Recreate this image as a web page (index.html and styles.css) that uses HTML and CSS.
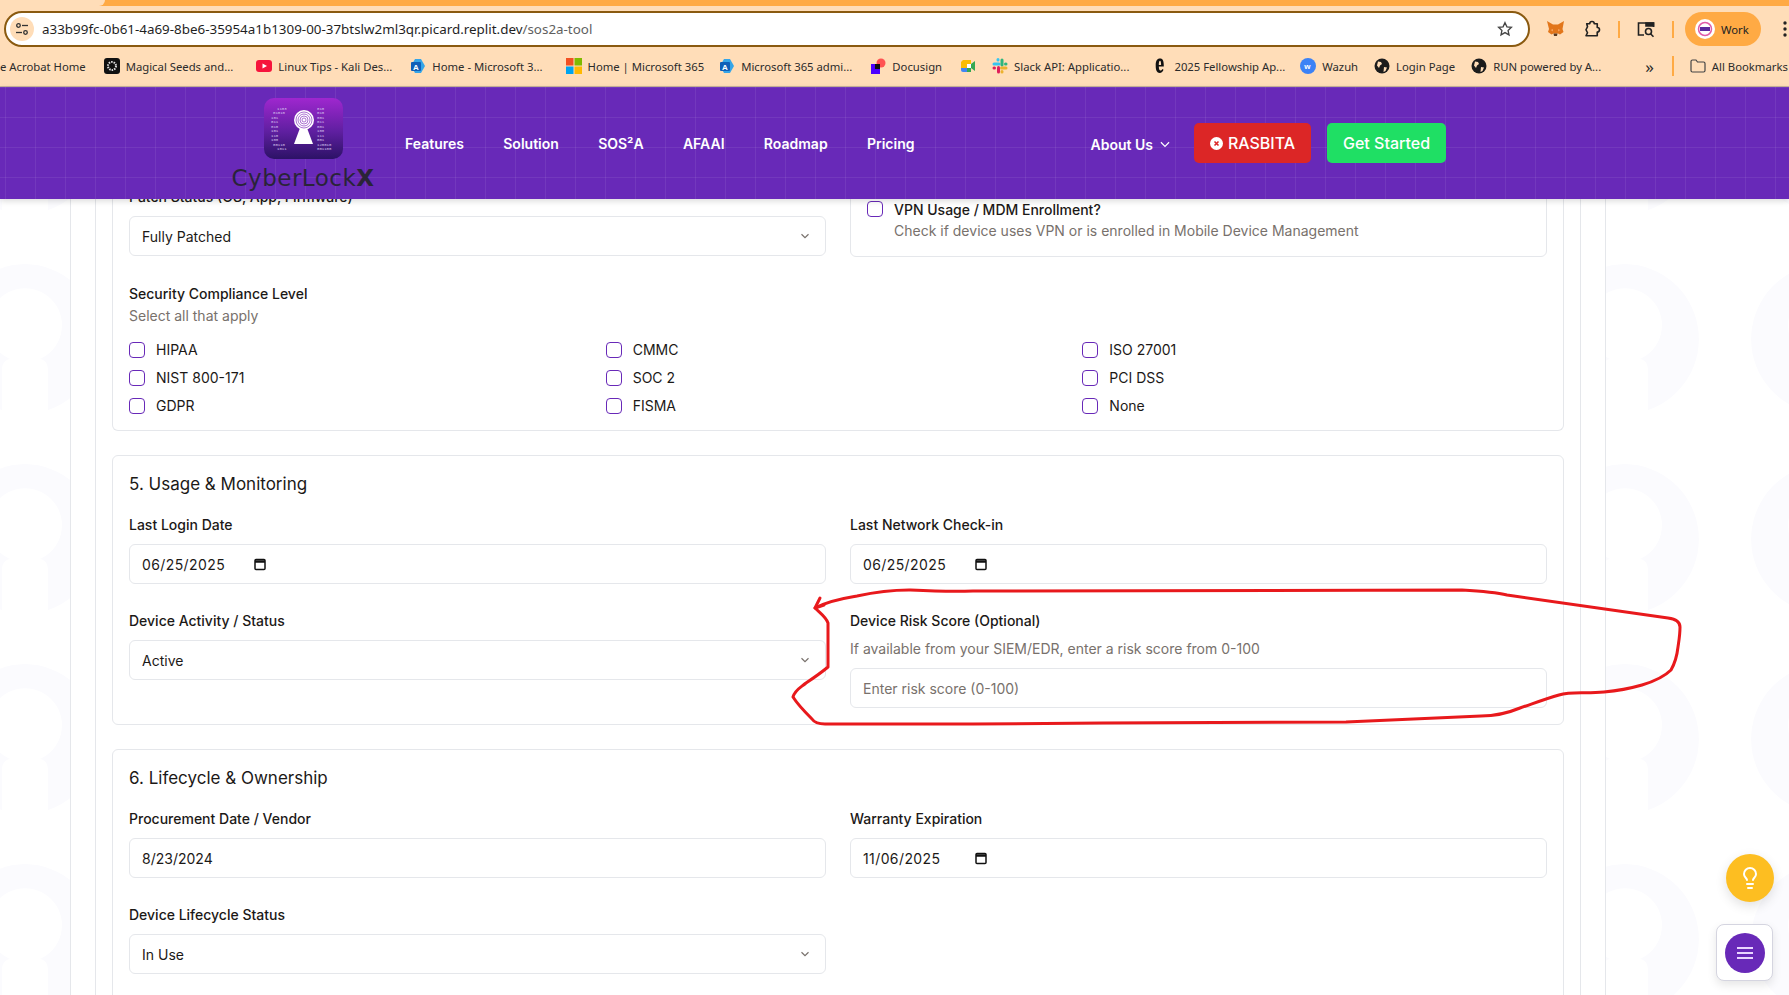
FILE: index.html
```html
<!DOCTYPE html>
<html>
<head>
	<meta charset="utf-8">
	<meta name="viewport" content="width=device-width, initial-scale=1">
	<title>SOS2A Tool</title>
	<link rel="stylesheet" href="styles.css">
</head>
<body>

    <div class="browser">
        <div class="tabstrip"><div class="tab-edge"></div></div>
        <div class="toolbar">
            <div class="urlbar">
                <span class="site-icon">
                    <svg width="14" height="14" viewBox="0 0 14 14" fill="none" stroke="#333" stroke-width="1.3"><circle cx="3.5" cy="3.5" r="1.8"/><path d="M7 3.5h6"/><circle cx="10.5" cy="10.5" r="1.8"/><path d="M1 10.5h6"/></svg>
                </span>
                <span class="url">a33b99fc-0b61-4a69-8be6-35954a1b1309-00-37btslw2ml3qr.picard.replit.dev<span class="url-path">/sos2a-tool</span></span>
                <svg class="star" width="16" height="16" viewBox="0 0 24 24" fill="none" stroke="#444" stroke-width="2"><path d="M12 2.5l2.9 6.2 6.7.8-5 4.6 1.4 6.7-6-3.4-6 3.4 1.4-6.7-5-4.6 6.7-.8z"/></svg>
            </div>
            <svg class="tool fox" width="17" height="16" viewBox="0 0 17 16"><path fill="#e2761b" d="M0 0l6 3.5h5L17 0l-1.5 8 1 3-3.5 2.500-2-1H6.500l-2 1L1 11l1-3z"/><path fill="#f6a05a" d="M6 8l-2.500 1L6 10.500zM11 8l2.500 1L11 10.500z"/><path fill="#5b3a20" d="M6.500 12.500h4L10 15H7z"/></svg>
            <svg class="tool puzzle" width="18" height="18" viewBox="0 0 24 24" fill="none" stroke="#222" stroke-width="2.200" stroke-linejoin="round"><path d="M5 5h4a3 3 0 0 1 6 0h4v5a3 3 0 0 1 0 6v5H4l2-4-2-4 2-4z"/></svg>
            <span class="tool-sep"></span>
            <svg class="tool capture" width="18" height="17" viewBox="0 0 18 17" fill="none" stroke="#222" stroke-width="1.600"><path d="M7 14H1.500V2h15v4"/><path fill="#222" d="M9 2h7.500v3H9z"/><circle cx="11.500" cy="10.500" r="3"/><path d="M13.500 12.800l3 3"/></svg>
            <span class="tool-sep"></span>
            <div class="profile">
                <svg width="20" height="20" viewBox="0 0 20 20"><circle cx="10" cy="10" r="10" fill="#fff"/><circle cx="10" cy="10" r="6.500" fill="none" stroke="#e05ca8" stroke-width="1.500"/><rect x="5" y="8" width="10" height="4" fill="#5b2a9e"/></svg>
                <span>Work</span>
            </div>
            <svg class="tool dots" width="4" height="16" viewBox="0 0 4 16" fill="#222"><circle cx="2" cy="2" r="1.700"/><circle cx="2" cy="8" r="1.700"/><circle cx="2" cy="14" r="1.700"/></svg>
        </div>

        <div class="bookmarks">
            <span class="bm bm-first">e Acrobat Home</span>
            <span class="bm">
                <svg width="16" height="16" viewBox="0 0 16 16"><rect width="16" height="16" rx="3" fill="#111"/><circle cx="8" cy="8" r="4" fill="none" stroke="#ddd" stroke-width="2" stroke-dasharray="1.500 1"/></svg>
                Magical Seeds and...
            </span>
            <span class="bm">
                <svg width="16" height="16" viewBox="0 0 16 16"><rect y="2" width="16" height="12" rx="3" fill="#f6143c"/><path d="M6.500 5.500L11 8l-4.500 2.500z" fill="#fff"/></svg>
                Linux Tips - Kali Des...
            </span>
            <span class="bm">
                <svg width="16" height="16" viewBox="0 0 16 16"><path d="M5 1h6l4 7-4 7H5L1 8z" fill="#35a5e8"/><rect x="1" y="4" width="10" height="9" rx="1" fill="#0f5fb8"/><text x="3" y="11.500" class="bm-glyph">A</text></svg>
                Home - Microsoft 3...
            </span>
            <span class="bm">
                <svg width="16" height="16" viewBox="0 0 16 16"><rect width="7.500" height="7.500" fill="#f25022"/><rect x="8.500" width="7.500" height="7.500" fill="#7fba00"/><rect y="8.500" width="7.500" height="7.500" fill="#00a4ef"/><rect x="8.500" y="8.500" width="7.500" height="7.500" fill="#ffb900"/></svg>
                Home | Microsoft 365
            </span>
            <span class="bm">
                <svg width="16" height="16" viewBox="0 0 16 16"><path d="M5 1h6l4 7-4 7H5L1 8z" fill="#35a5e8"/><rect x="1" y="4" width="10" height="9" rx="1" fill="#0f5fb8"/><text x="3" y="11.500" class="bm-glyph">A</text></svg>
                Microsoft 365 admi...
            </span>
            <span class="bm">
                <svg width="16" height="16" viewBox="0 0 16 16"><circle cx="11" cy="5" r="4.500" fill="#ff5252"/><rect x="1" y="6" width="9" height="10" fill="#4c00ff"/><rect x="5" y="6" width="5" height="5" fill="#111"/></svg>
                Docusign
            </span>
            <span class="bm">
                <svg width="16" height="16" viewBox="0 0 16 16"><path d="M3 2h8v4H7v4H1V4z" fill="#fbbc04"/><path d="M1 10h6v4H3a2 2 0 0 1-2-2z" fill="#4285f4"/><path d="M7 10h4V6l4-3v10l-4-3v4H7z" fill="#34a853"/><rect x="7" y="6" width="4" height="4" fill="#fff"/></svg>
            </span>
            <span class="bm">
                <svg width="16" height="16" viewBox="0 0 16 16" fill="none" stroke-width="3" stroke-linecap="round"><path d="M2 6h5" stroke="#36c5f0"/><path d="M6 1.500V2" stroke="#36c5f0"/><path d="M10 2v5" stroke="#2eb67d"/><path d="M14 6h-.5" stroke="#2eb67d"/><path d="M9.500 10H14" stroke="#ecb22e"/><path d="M10 14v-.5" stroke="#ecb22e"/><path d="M6.500 9.500V14" stroke="#e01e5a"/><path d="M2 10h.5" stroke="#e01e5a"/></svg>
                Slack API: Applicatio...
            </span>
            <span class="bm">
                <svg width="16" height="16" viewBox="0 0 16 16"><path d="M8 0.500c3 0 3.800 2.500 3.800 8H6.800c.1 2.500.6 4 1.700 4 .9 0 1.500-.6 2-1.500l1 .8c-.6 2-2 3.200-3.800 3.200-2.800 0-4-2.800-4-7.500S5 .5 8 .5zm-1.200 6.500h2.300c0-2.500-.3-4.200-1.100-4.200-.8 0-1.200 1.700-1.200 4.200z" fill="#111"/></svg>
                2025 Fellowship Ap...
            </span>
            <span class="bm">
                <svg width="16" height="16" viewBox="0 0 16 16"><circle cx="8" cy="8" r="8" fill="#3b82f6"/><text x="4.300" y="11" class="bm-glyph">w</text></svg>
                Wazuh
            </span>
            <span class="bm">
                <svg width="16" height="16" viewBox="0 0 16 16"><circle cx="8" cy="8" r="7.500" fill="#1c1c1c"/><path d="M4 3.500l3 .5 1 2-2 1.500-1 2.500-2-2.500zM10 9l3 .5-1.500 3.500-2 1z" fill="#ffddb8"/></svg>
                Login Page
            </span>
            <span class="bm">
                <svg width="16" height="16" viewBox="0 0 16 16"><circle cx="8" cy="8" r="7.500" fill="#1c1c1c"/><path d="M4 3.500l3 .5 1 2-2 1.500-1 2.500-2-2.500zM10 9l3 .5-1.500 3.500-2 1z" fill="#ffddb8"/></svg>
                RUN powered by A...
            </span>
            <span class="bm-more">&raquo;</span>
            <span class="bm-sep"></span>
            <span class="bm bm-all">
                <svg width="16" height="14" viewBox="0 0 16 14" fill="none" stroke="#444" stroke-width="1.200"><path d="M1 2.500A1.500 1.500 0 0 1 2.500 1H6l1.500 2h6A1.500 1.500 0 0 1 15 4.500v7a1.500 1.500 0 0 1-1.500 1.500h-11A1.500 1.500 0 0 1 1 11.500z"/></svg>
                All Bookmarks
            </span>
        </div>
    </div>

    <header class="site-header">
        <div class="brand">
            <svg class="brand-logo" width="79" height="61" viewBox="0 0 79 61">
                <defs>
                    <linearGradient id="logoFill" x1="0" y1="0" x2="0" y2="1">
                        <stop offset="0" stop-color="#9f27cf"/>
                        <stop offset="0.55" stop-color="#5f1fa0"/>
                        <stop offset="1" stop-color="#2c1266"/>
                    </linearGradient>
                </defs>
                <rect width="79" height="61" rx="10" fill="url(#logoFill)"/>
                <g class="logo-bits">
                    <text x="13" y="11.500">1103</text>
                    <text x="9" y="16">01010</text>
                    <text x="7" y="20.500">101</text>
                    <text x="7" y="25">011</text>
                    <text x="7" y="29.500">010</text>
                    <text x="7" y="34">101</text>
                    <text x="7" y="38.500">110</text>
                    <text x="7" y="43">100</text>
                    <text x="9" y="47.500">00110</text>
                    <text x="13" y="52">1011</text>
                    <text x="53" y="11.500">010</text>
                    <text x="53" y="16">010</text>
                    <text x="53" y="20.500">001</text>
                    <text x="53" y="25">011</text>
                    <text x="53" y="29.500">001</text>
                    <text x="53" y="34">100</text>
                    <text x="53" y="38.500">111</text>
                    <text x="53" y="43">001</text>
                    <text x="53" y="47.500">120010</text>
                    <text x="53" y="52">001100</text>
                </g>
                <path d="M36 30L30 46h19L43 30z" fill="#fff"/>
                <circle cx="40" cy="22" r="10" fill="#fff"/>
                <g fill="none" stroke="#8a3bc0" stroke-width="0.700">
                    <circle cx="40" cy="22" r="8"/>
                    <circle cx="40" cy="22" r="6"/>
                    <circle cx="40" cy="22" r="4"/>
                    <circle cx="40" cy="22" r="2"/>
                </g>
            </svg>
            <div class="wordmark">CyberLock<b>X</b></div>
        </div>
        <nav class="main-nav">
            <a>Features</a>
            <a>Solution</a>
            <a>SOS²A</a>
            <a>AFAAI</a>
            <a>Roadmap</a>
            <a>Pricing</a>
        </nav>
        <div class="header-right">
            <a class="about">About Us
                <svg width="14" height="14" viewBox="0 0 24 24" fill="none" stroke="#fff" stroke-width="2"><path d="M5 9l7 7 7-7"/></svg>
            </a>
            <button class="btn btn-red">
                <svg width="13" height="13" viewBox="0 0 13 13"><circle cx="6.500" cy="6.500" r="6.500" fill="#fff"/><path d="M4.500 4.500l4 4m0-4l-4 4" stroke="#dc2626" stroke-width="1.600"/></svg>
                RASBITA
            </button>
            <button class="btn btn-green">Get Started</button>
        </div>
    </header>

    <main class="page">
        <div class="shell">
            <div class="inner">

                <section class="card card-top">
                    <div class="form-row form-row-end">
                        <div class="field">
                            <label>Patch Status (OS, App, Firmware)</label>
                            <div class="control select">
                                <span>Fully Patched</span>
                                <svg width="14" height="14" viewBox="0 0 24 24" fill="none" stroke="#78716c" stroke-width="2"><path d="M6 9l6 6 6-6"/></svg>
                            </div>
                        </div>
                        <div class="check-box">
                            <input type="checkbox" class="check">
                            <div>
                                <div class="check-title">VPN Usage / MDM Enrollment?</div>
                                <div class="hint">Check if device uses VPN or is enrolled in Mobile Device Management</div>
                            </div>
                        </div>
                    </div>

                    <div class="compliance">
                        <label>Security Compliance Level</label>
                        <div class="hint">Select all that apply</div>
                        <div class="check-grid">
                            <div class="check-item"><input type="checkbox" class="check">HIPAA</div>
                            <div class="check-item"><input type="checkbox" class="check">CMMC</div>
                            <div class="check-item"><input type="checkbox" class="check">ISO 27001</div>
                            <div class="check-item"><input type="checkbox" class="check">NIST 800-171</div>
                            <div class="check-item"><input type="checkbox" class="check">SOC 2</div>
                            <div class="check-item"><input type="checkbox" class="check">PCI DSS</div>
                            <div class="check-item"><input type="checkbox" class="check">GDPR</div>
                            <div class="check-item"><input type="checkbox" class="check">FISMA</div>
                            <div class="check-item"><input type="checkbox" class="check">None</div>
                        </div>
                    </div>
                </section>

                <section class="card">
                    <h3>5. Usage &amp; Monitoring</h3>
                    <div class="form-row">
                        <div class="field">
                            <label>Last Login Date</label>
                            <div class="control date">
                                <span>06/25/2025</span>
                                <svg width="14" height="14" viewBox="0 0 14 14" fill="none" stroke="#111" stroke-width="1.500"><rect x="2" y="2.500" width="10" height="10" rx="1"/><path d="M2 4.500h10" stroke-width="2.500"/></svg>
                            </div>
                        </div>
                        <div class="field">
                            <label>Last Network Check-in</label>
                            <div class="control date">
                                <span>06/25/2025</span>
                                <svg width="14" height="14" viewBox="0 0 14 14" fill="none" stroke="#111" stroke-width="1.500"><rect x="2" y="2.500" width="10" height="10" rx="1"/><path d="M2 4.500h10" stroke-width="2.500"/></svg>
                            </div>
                        </div>
                        <div class="field">
                            <label>Device Activity / Status</label>
                            <div class="control select">
                                <span>Active</span>
                                <svg width="14" height="14" viewBox="0 0 24 24" fill="none" stroke="#78716c" stroke-width="2"><path d="M6 9l6 6 6-6"/></svg>
                            </div>
                        </div>
                        <div class="field">
                            <label>Device Risk Score (Optional)</label>
                            <div class="hint hint-field">If available from your SIEM/EDR, enter a risk score from 0-100</div>
                            <input class="control text-input" type="text" placeholder="Enter risk score (0-100)">
                        </div>
                    </div>
                </section>

                <section class="card card-last">
                    <h3>6. Lifecycle &amp; Ownership</h3>
                    <div class="form-row">
                        <div class="field">
                            <label>Procurement Date / Vendor</label>
                            <input class="control text-input" type="text" value="8/23/2024">
                        </div>
                        <div class="field">
                            <label>Warranty Expiration</label>
                            <div class="control date">
                                <span>11/06/2025</span>
                                <svg width="14" height="14" viewBox="0 0 14 14" fill="none" stroke="#111" stroke-width="1.500"><rect x="2" y="2.500" width="10" height="10" rx="1"/><path d="M2 4.500h10" stroke-width="2.500"/></svg>
                            </div>
                        </div>
                        <div class="field">
                            <label>Device Lifecycle Status</label>
                            <div class="control select">
                                <span>In Use</span>
                                <svg width="14" height="14" viewBox="0 0 24 24" fill="none" stroke="#78716c" stroke-width="2"><path d="M6 9l6 6 6-6"/></svg>
                            </div>
                        </div>
                    </div>
                </section>

            </div>
        </div>
    </main>

    <!-- hand drawn red circle from the screenshot -->
    <svg class="scribble" width="1789" height="995" viewBox="0 0 1789 995" fill="none" stroke="#e8191c" stroke-width="3" stroke-linecap="round" stroke-linejoin="round">
        <path d="M815 608C830 600 845 598 857 596C880 591 895 590 909 590C930 591 950 592 973 591L1462 590C1480 591 1495 592 1507 595L1668 618C1676 619 1680 622 1680 627C1680 635 1679 640 1678 647C1677 656 1675 663 1671 670C1663 678 1652 682 1642 685C1628 689 1615 691 1604 692C1585 694 1572 691 1559 695C1545 699 1532 704 1520 708C1508 713 1495 716 1481 716L1346 722L1102 723L973 724H825C818 724 814 722 812 719C805 712 798 705 793 697C795 690 800 688 806 683C815 677 822 672 828 667V623C826 617 820 613 815 608Z"/>
        <path d="M820 598L815 608L824 605"/>
    </svg>

    <button class="float-tip">
        <svg width="24" height="24" viewBox="0 0 24 24" fill="none" stroke="#fff" stroke-width="2" stroke-linecap="round" stroke-linejoin="round"><path d="M15 14c.2-1 .7-1.700 1.500-2.500 1-.9 1.500-2.200 1.500-3.500A6 6 0 0 0 6 8c0 1 .2 2.200 1.500 3.500.7.7 1.300 1.500 1.500 2.500"/><path d="M9 18h6"/><path d="M10 22h4"/></svg>
    </button>
    <div class="float-menu">
        <span class="menu-round">
            <svg width="16" height="14" viewBox="0 0 16 14" fill="none" stroke="#e9d5ff" stroke-width="2"><path d="M0 2h16M0 7h16M0 12h16"/></svg>
        </span>
    </div>

</body>
</html>
```

FILE: styles.css
```css
html, body {
    margin: 0;
    height: 995px;
    overflow: hidden;
}

body {
    position: relative;
    font-family: Inter, "Liberation Sans", sans-serif;
    font-size: 14px;
    color: #1c1917;
    background-color: #fff;
}

/* browser chrome */
.tabstrip {
    height: 6px;
    background-color: #ffaa44;
}

.tab-edge {
    width: 105px;
    height: 6px;
    background-color: #ffddb8;
    border-bottom-right-radius: 6px;
}

.toolbar {
    height: 41px;
    box-sizing: border-box;
    display: flex;
    align-items: center;
    background-color: #ffddb8;
    padding: 5px 0 0 4px;
}

.urlbar {
    width: 1526px;
    height: 36px;
    box-sizing: border-box;
    display: flex;
    align-items: center;
    background-color: #fff;
    border: 2px solid #8a5a10;
    border-radius: 18px;
    padding: 0 15px 0 4px;
}

.site-icon {
    width: 24px;
    height: 24px;
    border-radius: 50%;
    background-color: #ffddb8;
    display: flex;
    align-items: center;
    justify-content: center;
    margin-right: 8px;
}

.url {
    flex: 1;
    font-family: "Noto Sans", sans-serif;
    font-size: 13.400px;
    color: #1f1f1f;
}

.url-path {
    color: #5f5f5f;
}

.tool {
    flex: none;
}

.fox {
    margin-left: 17px;
}

.puzzle {
    margin-left: 19px;
}

.tool-sep {
    width: 2px;
    height: 17px;
    background-color: #ffaa44;
    margin: 0 17px;
}

.profile {
    width: 76px;
    height: 34px;
    box-sizing: border-box;
    margin-left: -6px;
    display: flex;
    align-items: center;
    gap: 6px;
    padding-left: 10px;
    border-radius: 17px;
    background-color: #ffaa44;
    font-family: "Noto Sans", sans-serif;
    font-size: 11.300px;
    color: #222;
}

.dots {
    margin-left: 22px;
}

.bookmarks {
    height: 40px;
    box-sizing: border-box;
    display: flex;
    align-items: center;
    gap: 18px;
    padding-bottom: 1px;
    background-color: #ffddb8;
    border-bottom: 1px solid #c9b39b;
    white-space: nowrap;
    overflow: hidden;
    font-family: "Noto Sans", sans-serif;
    font-size: 11.300px;
    color: #2b2b2b;
}

.bm {
    display: flex;
    align-items: center;
    gap: 6px;
    flex: none;
}

.bookmarks > :nth-child(3),
.bookmarks > :nth-child(5),
.bookmarks > :nth-child(10) {
    margin-left: 5px;
}

.bookmarks > :nth-child(6),
.bookmarks > :nth-child(11) {
    margin-left: -3px;
}

.bookmarks > :nth-child(9),
.bookmarks > :nth-child(12),
.bookmarks > :nth-child(13),
.bookmarks > :nth-child(16) {
    margin-left: -2px;
}

.bm-glyph {
    font-family: "Liberation Sans", sans-serif;
    font-size: 8px;
    font-weight: bold;
    fill: #fff;
}

.bookmarks > .bm-more {
    font-size: 17px;
    margin-left: 26px;
}

.bm-sep {
    flex: none;
    width: 2px;
    height: 20px;
    background-color: #ffaa44;
}

/* site header */
.site-header {
    position: relative;
    z-index: 5;
    height: 112px;
    box-sizing: border-box;
    display: flex;
    align-items: center;
    padding: 0 343px 0 232px;
    background-color: #6829b8;
    background-image:
        linear-gradient(rgba(255, 255, 255, 0.07) 1px, transparent 1px),
        linear-gradient(90deg, rgba(255, 255, 255, 0.07) 1px, transparent 1px);
    background-size: 30px 30px;
    background-position: 5px 0;
    box-shadow: 0 2px 6px rgba(0, 0, 0, 0.15);
}

.brand {
    width: 142px;
    display: flex;
    flex-direction: column;
    align-items: center;
    gap: 7px;
    margin-top: 2px;
}

.brand-logo {
    display: block;
}

.logo-bits {
    font-family: "Liberation Mono", monospace;
    font-size: 4px;
    fill: #d8c4ee;
}

.wordmark {
    font-family: "DejaVu Sans", sans-serif;
    font-size: 23px;
    line-height: 24px;
    letter-spacing: 0.500px;
    white-space: nowrap;
    color: #2a2438;
}

.main-nav {
    display: flex;
    gap: 39.300px;
    margin-left: 31px;
}

.main-nav a, .about {
    font-weight: 600;
    font-size: 14px;
    color: #fff;
}

.header-right {
    margin-left: auto;
    display: flex;
    align-items: center;
    gap: 16px;
}

.about {
    display: flex;
    align-items: center;
    gap: 5px;
    margin-top: 2px;
    margin-right: 6px;
}

.btn {
    height: 40px;
    border: none;
    border-radius: 5px;
    font-family: Inter, sans-serif;
    font-size: 16px;
    font-weight: 500;
    color: #fff;
    display: flex;
    align-items: center;
    gap: 5px;
    justify-content: center;
}

.btn-red {
    width: 117px;
    background-color: #dc2626;
}

.btn-green {
    width: 119px;
    background-color: #1fdf64;
}

/* page behind the form */
.page {
    height: 796px;
    padding-left: 70px;
    padding-right: 183px;
    overflow: hidden;
    background-color: #fff;
    background-image: url("data:image/svg+xml,%3Csvg xmlns='http://www.w3.org/2000/svg' width='200' height='200'%3E%3Cpath fill='%23fbfbfe' d='M100 25a75 75 0 0 1 23 146v-40c0-5-2-10-8-11a37 37 0 1 0-30 0c-6 1-8 6-8 11v40A75 75 0 0 1 100 25z'/%3E%3C/svg%3E");
    background-size: 200px 200px;
    background-position: -75px 40px;
}

.shell {
    width: 1536px;
    box-sizing: border-box;
    height: 860px;
    margin-top: -33px;
    background-color: #fff;
    border-left: 1px solid #e5e7eb;
    border-right: 1px solid #e5e7eb;
    padding: 0 24px;
}

.inner {
    height: 100%;
    border-left: 1px solid #e5e7eb;
    border-right: 1px solid #e5e7eb;
    padding: 0 16px;
    display: flex;
    flex-direction: column;
    gap: 24px;
}

.card {
    border: 1px solid #e5e7eb;
    border-radius: 6px;
    padding: 16px;
    background-color: #fff;
}

.card-top {
    border-top-color: transparent;
}

.card-last {
    padding-bottom: 60px;
}

.card h3 {
    margin: 0 0 19px;
    font-size: 17px;
    line-height: 24px;
    font-weight: 400;
}

.form-row {
    display: grid;
    grid-template-columns: 1fr 1fr;
    column-gap: 24px;
    row-gap: 27px;
}

.form-row-end {
    align-items: end;
}

label {
    display: block;
    font-weight: 500;
    line-height: 20px;
    margin-bottom: 9px;
}

.control {
    width: 100%;
    height: 40px;
    box-sizing: border-box;
    border: 1px solid #e5e7eb;
    border-radius: 6px;
    padding: 0 12px;
    background-color: #fff;
    font-family: Inter, sans-serif;
    font-size: 14px;
    color: #1c1917;
    display: flex;
    align-items: center;
}

.select {
    justify-content: space-between;
    padding-right: 13px;
}

.date {
    gap: 26px;
    letter-spacing: 0.400px;
}

.date span {
    width: 85px;
}

.text-input::placeholder {
    color: #78716c;
}

.hint {
    color: #78716c;
    line-height: 20px;
}

.hint-field {
    margin-top: -1px;
    margin-bottom: 9px;
}

.check-box {
    display: flex;
    gap: 11px;
    padding: 16px 16px 15px;
    margin-bottom: -1px;
    border: 1px solid #e5e7eb;
    border-radius: 6px;
}

.check-box .check {
    margin-top: 1px;
}

.check-title {
    font-weight: 500;
    line-height: 20px;
    margin-bottom: 1px;
}

.check {
    appearance: none;
    flex: none;
    width: 16px;
    height: 16px;
    margin: 0;
    border: 1px solid #6829b8;
    border-radius: 4px;
    background-color: #fff;
}

.compliance {
    margin-top: 28px;
}

.compliance label {
    margin-bottom: 2px;
}

.check-grid {
    display: grid;
    grid-template-columns: repeat(3, 1fr);
    column-gap: 12px;
    row-gap: 12px;
    margin-top: 16px;
}

.check-item {
    display: flex;
    align-items: center;
    gap: 11px;
    line-height: 16px;
}

/* annotation and floating buttons */
.scribble {
    position: absolute;
    left: 0;
    top: 0;
    z-index: 6;
    pointer-events: none;
}

.float-tip {
    position: absolute;
    left: 1726px;
    top: 854px;
    z-index: 7;
    width: 48px;
    height: 48px;
    border: none;
    border-radius: 50%;
    background-color: #fdbe21;
    box-shadow: 0 4px 12px rgba(0, 0, 0, 0.12);
    display: flex;
    align-items: center;
    justify-content: center;
}

.float-menu {
    position: absolute;
    left: 1716px;
    top: 924px;
    z-index: 7;
    width: 57px;
    height: 57px;
    box-sizing: border-box;
    border: 1px solid #d5d5e0;
    border-radius: 8px;
    background-color: #fff;
    box-shadow: 0 4px 10px rgba(0, 0, 0, 0.1);
    display: flex;
    align-items: center;
    justify-content: center;
}

.menu-round {
    width: 40px;
    height: 40px;
    border-radius: 50%;
    background-color: #6829b8;
    display: flex;
    align-items: center;
    justify-content: center;
}
```
